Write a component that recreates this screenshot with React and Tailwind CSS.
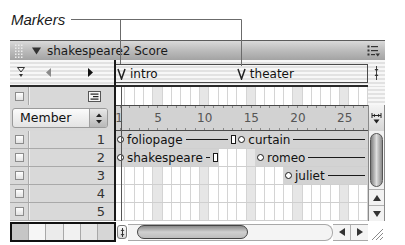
import React from 'react';

const FR = Array.from({ length: 27 }, (_, i) => i + 1);
const LABELS = { 1: '1', 5: '5', 10: '10', 15: '15', 20: '20', 25: '25' };
const PIN =
  'bg-[image:repeating-linear-gradient(180deg,#f7f7f7_0px,#f7f7f7_2px,#e2e2e2_2px,#e2e2e2_4px)]';

const CHANNELS = [
  {
    n: 1,
    sprites: [
      { cls: 'col-start-1 col-span-13', label: 'foliopage', end: true },
      { cls: 'col-start-14 col-span-14', label: 'curtain', end: false },
    ],
  },
  {
    n: 2,
    sprites: [
      { cls: 'col-start-1 col-span-11', label: 'shakespeare', end: true },
      { cls: 'col-start-16 col-span-12', label: 'romeo', end: false },
    ],
  },
  { n: 3, sprites: [{ cls: 'col-start-19 col-span-9', label: 'juliet', end: false }] },
  { n: 4, sprites: [] },
  { n: 5, sprites: [] },
];

function Check() {
  return (
    <div className="h-[9px] w-[9px] border border-[#8c8c8c] bg-linear-to-b from-[#ffffff] to-[#e2e2e2]" />
  );
}

function Cells() {
  return FR.map((f) => (
    <div
      key={f}
      className={`border-r border-[#d4d4d4] ${f % 5 === 0 ? 'bg-[#e6e6e6]' : 'bg-white'}`}
      style={{ gridColumnStart: f, gridRowStart: 1 }}
    />
  ));
}

function Sprite({ cls, label, end }) {
  return (
    <div
      className={`${cls} row-start-1 z-10 flex min-w-0 items-center overflow-hidden bg-[#d3d3d3]`}
    >
      <span className="ml-[1px] h-[7px] w-[7px] shrink-0 rounded-full border border-[#1a1a1a] bg-white" />
      <span className="ml-[3px] whitespace-nowrap text-[12px] leading-none text-[#111]">{label}</span>
      <span className="mx-[3px] h-px min-w-[2px] flex-1 bg-[#1a1a1a]" />
      {end && <span className="mr-[1px] h-[9px] w-[5px] shrink-0 border border-[#1a1a1a] bg-white" />}
    </div>
  );
}

function TitleBar() {
  return (
    <div className="flex h-[20px] items-center border-t border-[#5c5c5c] bg-linear-to-b from-[#dadada] via-[#bcbcbc] to-[#a3a3a3]">
      <svg width="10" height="14" className="ml-[4px]">
        {[0, 1, 2].map((c) =>
          [0, 1, 2, 3, 4].map((r) => (
            <rect key={`${c}-${r}`} x={c * 3 + 1} y={r * 3 + 0.5} width="1.5" height="1.5" fill="#ececec" />
          ))
        )}
      </svg>
      <svg width="9" height="8" className="ml-[8px]">
        <polygon points="0,0.5 9,0.5 4.5,7.5" fill="#333" />
      </svg>
      <span className="ml-[6px] whitespace-nowrap text-[12px] leading-none text-[#1a1a1a]">shakespeare2 Score</span>
      <svg width="13" height="12" className="ml-auto mr-[5px]">
        <rect x="0.5" y="0.5" width="2" height="2" fill="#333" />
        <rect x="0.5" y="4.5" width="2" height="2" fill="#333" />
        <rect x="0.5" y="8.5" width="2" height="2" fill="#333" />
        <rect x="4" y="1" width="7" height="1.2" fill="#333" />
        <rect x="4" y="5" width="7" height="1.2" fill="#333" />
        <rect x="4" y="9" width="4" height="1.2" fill="#333" />
        <polygon points="8.5,8.5 13,8.5 10.75,11.5" fill="#333" />
      </svg>
    </div>
  );
}

function MarkerV() {
  return (
    <svg width="9" height="12" className="shrink-0">
      <polyline points="1,1 4.5,11 8,1" fill="none" stroke="#222" strokeWidth="1.5" />
    </svg>
  );
}

function MarkerRow() {
  return (
    <div className="flex h-[27px]">
      <div className={`flex w-[104px] items-center border-b-2 border-[#2a2a2a] ${PIN}`}>
        <svg width="8" height="11" className="ml-[7px]">
          <polyline points="0.5,0.5 4,5 7.5,0.5 0.5,0.5" fill="none" stroke="#333" strokeWidth="1" />
          <polygon points="2,7 6,7 4,10" fill="#333" />
        </svg>
        <svg width="5" height="9" className="ml-[21px]">
          <polygon points="5,0 0,4.5 5,9" fill="#8a8a8a" />
        </svg>
        <svg width="5" height="9" className="ml-[37px]">
          <polygon points="0,0 5,4.5 0,9" fill="#111" />
        </svg>
      </div>
      <div className="w-[2px] bg-[#1a1a1a]" />
      <div className={`w-[252px] border-b-2 border-[#2a2a2a] pt-[4px] ${PIN}`}>
        <div className="grid h-[19px] grid-cols-[repeat(27,minmax(0,1fr))] border-y border-r border-[#4a4a4a]">
          <div className="col-span-13 col-start-1 row-start-1 flex items-center pl-[1px]">
            <MarkerV />
            <span className="ml-[4px] text-[12px] leading-none text-[#111]">intro</span>
          </div>
          <div className="col-span-14 col-start-14 row-start-1 flex items-center">
            <MarkerV />
            <span className="ml-[4px] text-[12px] leading-none text-[#111]">theater</span>
          </div>
        </div>
      </div>
      <div className={`flex w-[17px] justify-center pt-[6px] ${PIN}`}>
        <svg width="5" height="14">
          <line x1="2.5" y1="0" x2="2.5" y2="14" stroke="#444" strokeWidth="1" />
          <polygon points="0.5,3 4.5,3 2.5,5.5" fill="#333" />
          <polygon points="0.5,10 4.5,10 2.5,7.5" fill="#333" />
        </svg>
      </div>
    </div>
  );
}

function ScriptRow() {
  return (
    <div className="flex h-[18px]">
      <div className="flex w-[104px] bg-[#d8d8d8]">
        <div className="flex w-[19px] items-center justify-center border-r border-[#a8a8a8]">
          <Check />
        </div>
        <div className="flex flex-1 items-center justify-end border-l border-[#efefef] pr-[13px]">
          <svg width="13" height="11">
            <rect x="0.5" y="0.5" width="12" height="10" fill="#f6f6f6" stroke="#555" />
            <rect x="2.5" y="2.5" width="8" height="1.2" fill="#222" />
            <rect x="5" y="5" width="5.5" height="1.2" fill="#222" />
            <rect x="2.5" y="7.5" width="8" height="1.2" fill="#222" />
          </svg>
        </div>
      </div>
      <div className="w-[2px] bg-[#1a1a1a]" />
      <div className="grid w-[252px] grid-cols-[repeat(27,minmax(0,1fr))]">
        <Cells />
      </div>
      <div className={`w-[17px] ${PIN}`} />
    </div>
  );
}

function RulerRow() {
  return (
    <div className="flex h-[26px]">
      <div className="flex w-[104px] items-center bg-[#d8d8d8] pl-[2px]">
        <div className="flex h-[20px] w-[96px] overflow-hidden rounded-[3px] border border-[#9a9a9a] bg-linear-to-b from-[#fbfbfb] to-[#e3e3e3]">
          <span className="flex flex-1 items-center pl-[7px] text-[12.5px] leading-none text-[#111]">Member</span>
          <span className="flex w-[18px] items-center justify-center border-l border-[#a0a0a0] bg-linear-to-b from-[#e8e8e8] to-[#b8b8b8]">
            <svg width="6" height="11">
              <polygon points="0,4 6,4 3,0.5" fill="#222" />
              <polygon points="0,7 6,7 3,10.5" fill="#222" />
            </svg>
          </span>
        </div>
      </div>
      <div className="w-[2px] bg-[#1a1a1a]" />
      <div className="grid w-[252px] grid-cols-[repeat(27,minmax(0,1fr))] border-y border-[#4a4a4a] bg-[#d2d2d2]">
        {FR.map((f) => (
          <div key={f} className="flex flex-col items-center justify-between">
            <div className="h-[2px] w-px bg-[#8a8a8a]" />
            <span
              className={`whitespace-nowrap text-[12px] leading-none text-[#555] ${f === 1 ? 'mr-[3px]' : ''}`}
            >
              {LABELS[f] || ''}
            </span>
            <div className="h-[2px] w-px bg-[#8a8a8a]" />
          </div>
        ))}
      </div>
      <div className="flex w-[17px] items-center justify-center border-r border-l border-[#8a8a8a] bg-linear-to-b from-[#f4f4f4] to-[#d6d6d6]">
        <svg width="11" height="11">
          <line x1="1" y1="0" x2="1" y2="5" stroke="#222" />
          <line x1="10" y1="0" x2="10" y2="5" stroke="#222" />
          <line x1="1" y1="2.5" x2="10" y2="2.5" stroke="#222" />
          <polygon points="2,2.5 4,0.8 4,4.2" fill="#222" />
          <polygon points="9,2.5 7,0.8 7,4.2" fill="#222" />
          <polygon points="2.5,6.5 8.5,6.5 5.5,10.5" fill="#222" />
        </svg>
      </div>
    </div>
  );
}

function ChannelRow({ n, sprites }) {
  return (
    <div className="flex h-[18px]">
      <div className="flex w-[104px] border-b border-[#a9a9a9] bg-[#d9d9d9]">
        <div className="flex w-[19px] items-center justify-center border-r border-[#ababab]">
          <Check />
        </div>
        <div className="flex flex-1 items-center justify-end border-l border-[#efefef] pr-[9px] text-[13px] leading-none text-[#333]">
          {n}
        </div>
      </div>
      <div className="w-[2px] bg-[#1a1a1a]" />
      <div className="grid w-[252px] grid-cols-[repeat(27,minmax(0,1fr))] border-b border-[#cfcfcf]">
        <Cells />
        {sprites.map((s) => (
          <Sprite key={s.label} {...s} />
        ))}
      </div>
    </div>
  );
}

function VScroll() {
  return (
    <div className="flex h-[90px] w-[17px] flex-col border-r border-l border-[#8a8a8a] bg-[#f2f2f2]">
      <div className="mx-auto mt-[2px] h-[54px] w-[13px] rounded-full border border-[#555] bg-linear-to-r from-[#7e7e7e] via-[#dedede] to-[#8a8a8a]" />
      <div className="flex-1" />
      <div className="flex h-[16px] items-center justify-center border-t border-[#b0b0b0]">
        <svg width="8" height="6">
          <polygon points="0,6 8,6 4,0" fill="#333" />
        </svg>
      </div>
      <div className="flex h-[16px] items-center justify-center border-t border-[#b0b0b0]">
        <svg width="8" height="6">
          <polygon points="0,0 8,0 4,6" fill="#333" />
        </svg>
      </div>
    </div>
  );
}

function BottomBar() {
  const boxes = ['bg-[#c6c6c6]', 'bg-[#f6f6f6]', 'bg-[#ebebeb]', 'bg-[#f1f1f1]', 'bg-[#e6e6e6]', 'bg-[#d6d6d6]'];
  return (
    <div className="flex h-[22px] items-center">
      <div className="flex h-[20px] w-[106px] border-2 border-[#111]">
        {boxes.map((b, i) => (
          <div key={i} className={`flex-1 border-r border-[#a8a8a8] last:border-r-0 ${b}`} />
        ))}
      </div>
      <div className="flex h-[20px] w-[12px] items-center justify-center">
        <div className="flex h-[14px] w-[10px] items-center justify-center rounded-[3px] border border-[#777] bg-linear-to-b from-[#fafafa] to-[#d8d8d8]">
          <svg width="5" height="9">
            <line x1="2.5" y1="0" x2="2.5" y2="9" stroke="#333" />
            <polygon points="0.5,3 4.5,3 2.5,1" fill="#333" />
            <polygon points="0.5,6 4.5,6 2.5,8" fill="#333" />
          </svg>
        </div>
      </div>
      <div className="flex h-[17px] w-[205px] items-center rounded-r-[8px] border-y border-r border-[#a8a8a8] bg-[#f4f4f4]">
        <div className="ml-[9px] h-[14px] w-[111px] rounded-full border border-[#444] bg-linear-to-b from-[#8a8a8a] via-[#d0d0d0] to-[#bdbdbd]" />
      </div>
      <div className="flex h-[17px] w-[35px] items-center border-y border-[#a8a8a8] bg-[#f4f4f4]">
        <div className="flex flex-1 justify-center">
          <svg width="6" height="8">
            <polygon points="6,0 0,4 6,8" fill="#333" />
          </svg>
        </div>
        <div className="h-full w-px bg-[#b0b0b0]" />
        <div className="flex flex-1 justify-center">
          <svg width="6" height="8">
            <polygon points="0,0 6,4 0,8" fill="#333" />
          </svg>
        </div>
      </div>
      <div className="flex h-[20px] w-[17px] items-end justify-end pb-[2px] pr-[2px]">
        <svg width="12" height="12">
          <line x1="1" y1="12" x2="12" y2="1" stroke="#8a8a8a" />
          <line x1="5" y1="12" x2="12" y2="5" stroke="#8a8a8a" />
          <line x1="9" y1="12" x2="12" y2="9" stroke="#8a8a8a" />
        </svg>
      </div>
    </div>
  );
}

export default function App() {
  return (
    <div className="relative h-[245px] w-[405px] overflow-hidden bg-white font-['DejaVu_Sans',sans-serif]">
      <div className="h-[40px] pl-[11px] pt-[12px]">
        <span className="block font-['Liberation_Sans',Arial,sans-serif] text-[15px] italic leading-[15px] text-[#1a1a1a]">
          Markers
        </span>
      </div>
      <div className="relative ml-[10px] w-[375px]">
        <TitleBar />
        <MarkerRow />
        <ScriptRow />
        <RulerRow />
        <div className="flex">
          <div className="flex flex-col">
            {CHANNELS.map((c) => (
              <ChannelRow key={c.n} {...c} />
            ))}
          </div>
          <VScroll />
        </div>
        <BottomBar />
        <div className="absolute left-[111px] top-[47px] z-20 h-[134px] w-px bg-[#555]" />
      </div>
      <svg className="pointer-events-none absolute left-0 top-0" width="405" height="245">
        <path d="M71 19.5H241.5M120.5 19.5V64M241.5 19.5V66" stroke="#6b6b6b" fill="none" />
      </svg>
    </div>
  );
}
